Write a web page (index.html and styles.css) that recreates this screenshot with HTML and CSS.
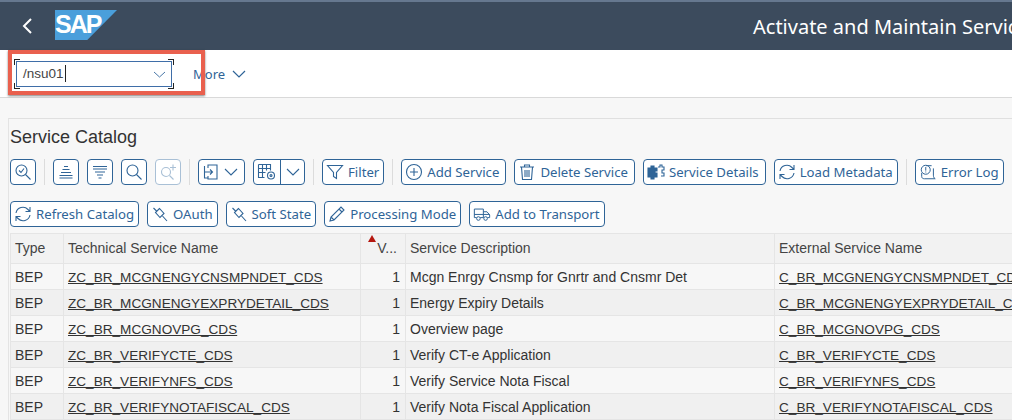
FILE: index.html
```html
<!DOCTYPE html>
<html lang="en">
<head>
    <meta charset="UTF-8">
    <title>Activate and Maintain Services</title>
    <link rel="stylesheet" href="styles.css">
</head>
<body>

<header class="shell">
    <svg class="back" width="12" height="18" viewBox="0 0 12 18"><path d="M10 2 3 9l7 7" fill="none" stroke="#fff" stroke-width="2"/></svg>
    <div class="logo"><span class="logo-text">SAP</span></div>
    <div class="title">Activate and Maintain Services</div>
</header>

<div class="cmdbar">
    <div class="cmd-field">
        <span class="cmd-value">/nsu01</span><span class="caret"></span>
        <svg class="chev" width="13" height="7" viewBox="0 0 13 7"><path d="M1 1l5.500 5L12 1" fill="none" stroke="#4a78a8" stroke-width="1"/></svg>
        <span class="corner tl"></span><span class="corner tr"></span><span class="corner bl"></span><span class="corner br"></span>
    </div>
    <div class="more">More
        <svg width="14" height="8" viewBox="0 0 14 8"><path d="M1 1l6 6 6-6" fill="none" stroke="#2f6497" stroke-width="1.2"/></svg>
    </div>
</div>
<div class="highlight"></div>

<main class="content">
    <section class="panel">
        <h2 class="panel-title">Service Catalog</h2>

        <div class="toolbar">
            <button class="btn icon-only"><svg width="18" height="18" viewBox="0 0 18 18"><circle cx="7.500" cy="7.500" r="5.500"/><path d="M5 7.500l2 2 3-4M11.500 11.500l5 5"/></svg></button>
            <span class="sep"></span>
            <button class="btn icon-only"><svg width="18" height="18" viewBox="0 0 18 18"><path d="M7 3.500h4M5.500 6.500h7M4 9.500h10M2.500 12.500h13M2.500 15h13"/></svg></button>
            <button class="btn icon-only"><svg width="18" height="18" viewBox="0 0 18 18"><path d="M2 3.500h14M2 6h14M4 9h10M6 12h6M7.500 15h3"/></svg></button>
            <button class="btn icon-only"><svg width="18" height="18" viewBox="0 0 18 18"><circle cx="7.500" cy="7.500" r="5.500"/><path d="M11.500 11.500l5 5"/></svg></button>
            <button class="btn icon-only disabled"><svg width="18" height="18" viewBox="0 0 18 18"><circle cx="7" cy="9" r="4.500"/><path d="M10.500 12.500l4 4M14 1.500v6M11 4.500h6"/></svg></button>
            <span class="sep"></span>
            <button class="btn menu"><svg width="18" height="18" viewBox="0 0 18 18"><path d="M6 5V2h9v14H6v-3M2.500 3v12H6M3 9h7M8 6.500 10.500 9 8 11.500"/></svg><svg class="down" width="14" height="8" viewBox="0 0 14 8"><path d="M1 1l6 6 6-6"/></svg></button>
            <button class="btn split"><span class="split-main"><svg width="20" height="18" viewBox="0 0 20 18"><path d="M1.500 1.500h12v6M1.500 1.500v13h6M1.500 5.500h12M1.500 9.500h7M5.500 1.500v13M9.500 1.500v6"/><circle cx="14" cy="12.500" r="3.500"/><circle cx="14" cy="12.500" r="1"/></svg></span><span class="split-arrow"><svg class="down" width="14" height="8" viewBox="0 0 14 8"><path d="M1 1l6 6 6-6"/></svg></span></button>
            <span class="sep"></span>
            <button class="btn"><svg width="18" height="18" viewBox="0 0 18 18"><path d="M1.500 2.500h15l-6 7v6l-3-2v-4z"/></svg>Filter</button>
            <span class="sep"></span>
            <button class="btn roomy"><svg width="18" height="18" viewBox="0 0 18 18"><circle cx="9" cy="9" r="7.500"/><path d="M9 5v8M5 9h8"/></svg>Add Service</button>
            <button class="btn roomy"><svg width="18" height="18" viewBox="0 0 18 18"><path d="M2 4h14M6.500 4V2h5v2M3.500 4l1 12.500h9l1-12.500M7 7v7M9 7v7M11 7v7"/></svg>Delete Service</button>
            <button class="btn roomy"><svg width="18" height="18" viewBox="0 0 18 18"><path class="solid" d="M1 5h3V3h3v2h3v3H8v2h2v4H7v2H4v-2H1z"/><path d="M11 4h2V2h2v2h2v3h-2v3h2v3h-3"/></svg>Service Details</button>
            <button class="btn"><svg width="18" height="18" viewBox="0 0 18 18"><path d="M2 8a7 7 0 0 1 12-3.500L16 6.500M16 2v4.500h-4.500M16 10a7 7 0 0 1-12 3.500L2 11.500M2 16v-4.500h4.500"/></svg>Load Metadata</button>
            <span class="sep"></span>
            <button class="btn"><svg width="18" height="18" viewBox="0 0 20 18"><path d="M14 2H8M3 10v4c0 1.500 1 2.500 3 2.500h12c-1.500-1-2-2-2-4V5"/><circle cx="7.500" cy="6.500" r="5"/><path d="M7.500 3.500v4M7.500 8.500v1"/></svg>Error Log</button>
            <span class="sep"></span>
        </div>

        <div class="toolbar second">
            <button class="btn"><svg width="18" height="18" viewBox="0 0 18 18"><path d="M2 8a7 7 0 0 1 12-3.500L16 6.500M16 2v4.500h-4.500M16 10a7 7 0 0 1-12 3.500L2 11.500M2 16v-4.500h4.500"/></svg>Refresh Catalog</button>
            <button class="btn"><svg width="18" height="18" viewBox="0 0 18 18"><path d="M2.500 3l3 3M8.500 3.500 4.500 7.500 9 12.500l4-4zM11.500 11l4.500 5"/></svg>OAuth</button>
            <button class="btn"><svg width="18" height="18" viewBox="0 0 18 18"><path d="M2.500 3l3 3M8.500 3.500 4.500 7.500 9 12.500l4-4zM11.500 11l4.500 5"/></svg>Soft State</button>
            <button class="btn"><svg width="18" height="18" viewBox="0 0 18 18"><path d="M2 16l1-4L13 2l3 3L6 15zM3 12l3 3M11 4l3 3"/></svg>Processing Mode</button>
            <button class="btn"><svg width="18" height="18" viewBox="0 0 20 18"><path d="M4 13H1.500V3.500h10V13H8M11.500 6.500h4l3 3.500v3H16M11.500 13H12M1.500 9.500h17"/><circle cx="6" cy="14" r="2"/><circle cx="14" cy="14" r="2"/></svg>Add to Transport</button>
        </div>

        <table class="grid">
            <colgroup>
                <col class="c-type"><col class="c-tech"><col class="c-ver"><col class="c-desc"><col class="c-ext">
            </colgroup>
            <thead>
                <tr>
                    <th>Type</th>
                    <th>Technical Service Name</th>
                    <th class="num"><span class="sort"></span>V...</th>
                    <th>Service Description</th>
                    <th>External Service Name</th>
                </tr>
            </thead>
            <tbody>
                <tr><td>BEP</td><td><a href="#">ZC_BR_MCGNENGYCNSMPNDET_CDS</a></td><td class="num">1</td><td>Mcgn Enrgy Cnsmp for Gnrtr and Cnsmr Det</td><td><a href="#">C_BR_MCGNENGYCNSMPNDET_CDS</a></td></tr>
                <tr><td>BEP</td><td><a href="#">ZC_BR_MCGNENGYEXPRYDETAIL_CDS</a></td><td class="num">1</td><td>Energy Expiry Details</td><td><a href="#">C_BR_MCGNENGYEXPRYDETAIL_CDS</a></td></tr>
                <tr><td>BEP</td><td><a href="#">ZC_BR_MCGNOVPG_CDS</a></td><td class="num">1</td><td>Overview page</td><td><a href="#">C_BR_MCGNOVPG_CDS</a></td></tr>
                <tr><td>BEP</td><td><a href="#">ZC_BR_VERIFYCTE_CDS</a></td><td class="num">1</td><td>Verify CT-e Application</td><td><a href="#">C_BR_VERIFYCTE_CDS</a></td></tr>
                <tr><td>BEP</td><td><a href="#">ZC_BR_VERIFYNFS_CDS</a></td><td class="num">1</td><td>Verify Service Nota Fiscal</td><td><a href="#">C_BR_VERIFYNFS_CDS</a></td></tr>
                <tr><td>BEP</td><td><a href="#">ZC_BR_VERIFYNOTAFISCAL_CDS</a></td><td class="num">1</td><td>Verify Nota Fiscal Application</td><td><a href="#">C_BR_VERIFYNOTAFISCAL_CDS</a></td></tr>
            </tbody>
        </table>
    </section>
</main>

</body>
</html>
```

FILE: styles.css
```css
html, body {
    margin: 0;
    height: 420px;
    overflow: hidden;
}
body {
    font-family: "Liberation Sans", Arial, sans-serif;
    background: #f7f7f7;
    position: relative;
    width: 1012px;
}
.shell {
    height: 50px;
    box-sizing: border-box;
    background: #3c4b5d;
    border-top: 2px solid #66788f;
    display: flex;
    align-items: center;
    white-space: nowrap;
    overflow: hidden;
}
.back {
    margin: 0 0 0 21px;
    flex: none;
}
.logo {
    margin: -2px 0 0 22px;
    width: 62px;
    height: 30px;
    flex: none;
    background: #4a9fdb;
    clip-path: polygon(0 0, 100% 0, 52% 100%, 0 100%);
    overflow: hidden;
}
.logo-text {
    display: block;
    font-weight: bold;
    font-size: 25px;
    line-height: 28px;
    letter-spacing: -2px;
    color: #fff;
}
.title {
    margin-left: 636px;
    font-family: "Noto Sans", sans-serif;
    font-size: 20px;
    color: #fff;
    flex: none;
}
.cmdbar {
    height: 48px;
    box-sizing: border-box;
    background: #fff;
    border-bottom: 1px solid #d9d9d9;
    display: flex;
    align-items: center;
    padding: 0 0 0 16px;
}
.cmd-field {
    width: 156px;
    height: 26px;
    box-sizing: border-box;
    border: 1px solid #3f6ea8;
    display: flex;
    align-items: center;
    padding-left: 6px;
    font-size: 13.500px;
    color: #444;
    position: relative;
}
.caret {
    width: 1px;
    height: 17px;
    background: #222;
    margin-left: 1px;
}
.chev {
    position: absolute;
    right: 5px;
    top: 9px;
}
.corner {
    position: absolute;
    width: 5px;
    height: 5px;
    border: 0 solid #222;
}
.tl { left: -3px; top: -3px; border-width: 1px 0 0 1px; }
.tr { right: -3px; top: -3px; border-width: 1px 1px 0 0; }
.bl { left: -3px; bottom: -3px; border-width: 0 0 1px 1px; }
.br { right: -3px; bottom: -3px; border-width: 0 1px 1px 0; }
.more {
    margin-left: 21px;
    font-family: "Noto Sans", sans-serif;
    font-size: 13px;
    color: #2f6497;
    display: flex;
    align-items: center;
    gap: 7px;
}
.highlight {
    position: absolute;
    left: 8px;
    top: 50px;
    width: 197px;
    height: 45px;
    box-sizing: border-box;
    border: 4px solid #e9604e;
    box-shadow: 0 1px 2px rgba(0, 0, 0, 0.5);
}
.content {
    padding: 20px 0 0 8px;
}
.panel {
    border-top: 1px solid #e0e0e0;
    border-left: 1px solid #e4e4e4;
    padding: 8px 0 0 1px;
    white-space: nowrap;
}
.panel-title {
    margin: 0;
    font-size: 18px;
    font-weight: normal;
    line-height: 20px;
    color: #333;
}
.toolbar {
    display: flex;
    align-items: center;
    gap: 8px;
    margin-top: 12px;
    height: 26px;
}
.toolbar.second {
    margin-top: 16px;
}
.btn {
    height: 26px;
    box-sizing: border-box;
    padding: 0 4px 0 3px;
    background: #fff;
    border: 1px solid #2f6497;
    border-radius: 4px;
    font-family: "Noto Sans", sans-serif;
    font-size: 13.200px;
    color: #2f6497;
    display: flex;
    align-items: center;
    gap: 4px;
    flex: none;
}
.roomy {
    padding-right: 6px;
}
.btn svg {
    fill: none;
    stroke: #2f6497;
    stroke-width: 1.100;
    flex: none;
}
.btn svg .solid {
    fill: #2f6497;
}
.icon-only {
    width: 26px;
    justify-content: center;
    padding: 0;
}
.disabled {
    border-color: #a9c0d6;
}
.btn.disabled svg {
    stroke: #a9c0d6;
}
.menu {
    width: 47px;
}
.split {
    width: 52px;
    padding: 0;
    gap: 0;
}
.split-main {
    width: 26px;
    height: 24px;
    display: flex;
    align-items: center;
    justify-content: center;
    border-right: 1px solid #2f6497;
}
.split-arrow {
    flex: 1;
    display: flex;
    justify-content: center;
}
.sep {
    width: 1px;
    height: 26px;
    background: #dcdcdc;
    flex: none;
}
.grid {
    margin-top: 6px;
    table-layout: fixed;
    border-collapse: collapse;
    width: 1101px;
    font-size: 14px;
    color: #333;
}
.c-type { width: 53px; }
.c-tech { width: 297px; }
.c-ver { width: 45px; }
.c-desc { width: 369px; }
.c-ext { width: 337px; }
.grid th, .grid td {
    border: 1px solid #e5e5e5;
    padding: 0 5px 0 4px;
    text-align: left;
    font-weight: normal;
    overflow: hidden;
}
.grid th {
    height: 27px;
    padding-bottom: 2px;
    background: #f2f2f2;
    position: relative;
    color: #444;
}
.grid td {
    height: 25px;
    background: #f7f7f7;
}
.grid tbody tr:nth-child(even) td {
    background: #f0f0f0;
}
.grid a {
    color: #333;
    font-size: 13.600px;
    text-decoration: underline;
}
.grid .num {
    text-align: right;
}
.grid th.num {
    padding-right: 8px;
}
.sort {
    position: absolute;
    left: 7px;
    top: 1px;
    width: 0;
    height: 0;
    border-left: 4px solid transparent;
    border-right: 4px solid transparent;
    border-bottom: 7px solid #b5170f;
}
```
